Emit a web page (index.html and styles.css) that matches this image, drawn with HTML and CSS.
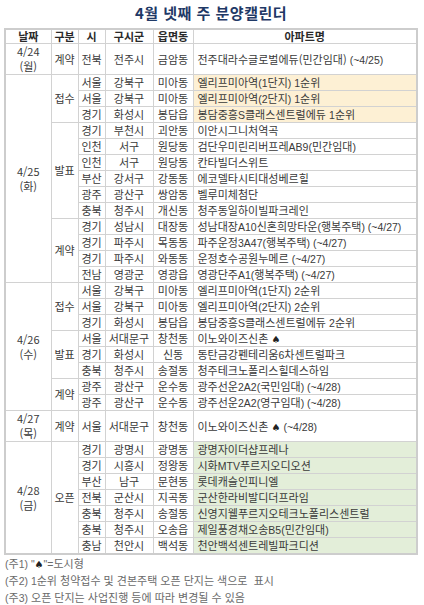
FILE: index.html
```html
<!DOCTYPE html>
<html lang="ko">
<head>
<meta charset="utf-8">
<link rel="stylesheet" href="styles.css">
</head>
<body>
<div class="page">
  <h1 class="title">4월 넷째 주 분양캘린더</h1>
  <table class="cal">
    <colgroup>
      <col class="c-date"><col class="c-type"><col class="c-si"><col class="c-gu"><col class="c-dong"><col class="c-apt">
    </colgroup>
    <thead>
      <tr><th>날짜</th><th>구분</th><th>시</th><th>구시군</th><th>읍면동</th><th>아파트명</th></tr>
    </thead>
    <tbody>
      <tr class="tall"><td>4/24<br>(월)</td><td>계약</td><td>전북</td><td>전주시</td><td>금암동</td><td class="apt">전주대라수글로벌에듀(민간임대) <span class="en">(~4/25)</span></td></tr>

      <tr><td rowspan="13">4/25<br>(화)</td><td rowspan="3">접수</td><td>서울</td><td>강북구</td><td>미아동</td><td class="apt hl-y">엘리프미아역<span class="en">(1</span>단지<span class="en">) 1</span>순위</td></tr>
      <tr><td>서울</td><td>강북구</td><td>미아동</td><td class="apt hl-y">엘리프미아역<span class="en">(2</span>단지<span class="en">) 1</span>순위</td></tr>
      <tr><td>경기</td><td>화성시</td><td>봉담읍</td><td class="apt hl-y">봉담중흥<span class="en">S</span>클래스센트럴에듀 <span class="en">1</span>순위</td></tr>
      <tr><td rowspan="6">발표</td><td>경기</td><td>부천시</td><td>괴안동</td><td class="apt">이안시그니처역곡</td></tr>
      <tr><td>인천</td><td>서구</td><td>원당동</td><td class="apt">검단우미린리버프레<span class="en">AB9(</span>민간임대<span class="en">)</span></td></tr>
      <tr><td>인천</td><td>서구</td><td>원당동</td><td class="apt">칸타빌더스위트</td></tr>
      <tr><td>부산</td><td>강서구</td><td>강동동</td><td class="apt">에코델타시티대성베르힐</td></tr>
      <tr><td>광주</td><td>광산구</td><td>쌍암동</td><td class="apt">벨루미체첨단</td></tr>
      <tr><td>충북</td><td>청주시</td><td>개신동</td><td class="apt">청주동일하이빌파크레인</td></tr>
      <tr><td rowspan="4">계약</td><td>경기</td><td>성남시</td><td>대장동</td><td class="apt">성남대장<span class="en">A10</span>신혼희망타운<span class="en">(</span>행복주택<span class="en">) (~4/27)</span></td></tr>
      <tr><td>경기</td><td>파주시</td><td>목동동</td><td class="apt">파주운정<span class="en">3A47(</span>행복주택<span class="en">) (~4/27)</span></td></tr>
      <tr><td>경기</td><td>파주시</td><td>와동동</td><td class="apt">운정호수공원누메르 <span class="en">(~4/27)</span></td></tr>
      <tr><td>전남</td><td>영광군</td><td>영광읍</td><td class="apt">영광단주<span class="en">A1(</span>행복주택<span class="en">) (~4/27)</span></td></tr>

      <tr><td rowspan="8">4/26<br>(수)</td><td rowspan="3">접수</td><td>서울</td><td>강북구</td><td>미아동</td><td class="apt">엘리프미아역<span class="en">(1</span>단지<span class="en">) 2</span>순위</td></tr>
      <tr><td>서울</td><td>강북구</td><td>미아동</td><td class="apt">엘리프미아역<span class="en">(2</span>단지<span class="en">) 2</span>순위</td></tr>
      <tr><td>경기</td><td>화성시</td><td>봉담읍</td><td class="apt">봉담중흥<span class="en">S</span>클래스센트럴에듀 <span class="en">2</span>순위</td></tr>
      <tr><td rowspan="3">발표</td><td>서울</td><td>서대문구</td><td>창천동</td><td class="apt">이노와이즈신촌 <span class="spade">♠</span></td></tr>
      <tr><td>경기</td><td>화성시</td><td>신동</td><td class="apt">동탄금강펜테리움<span class="en">6</span>차센트럴파크</td></tr>
      <tr><td>충북</td><td>청주시</td><td>송절동</td><td class="apt">청주테크노폴리스힐데스하임</td></tr>
      <tr><td rowspan="2">계약</td><td>광주</td><td>광산구</td><td>운수동</td><td class="apt">광주선운<span class="en">2A2(</span>국민임대<span class="en">) (~4/28)</span></td></tr>
      <tr><td>광주</td><td>광산구</td><td>운수동</td><td class="apt">광주선운<span class="en">2A2(</span>영구임대<span class="en">) (~4/28)</span></td></tr>

      <tr class="tall"><td>4/27<br>(목)</td><td>계약</td><td>서울</td><td>서대문구</td><td>창천동</td><td class="apt">이노와이즈신촌 <span class="spade">♠</span> <span class="en">(~4/28)</span></td></tr>

      <tr><td rowspan="7">4/28<br>(금)</td><td rowspan="7">오픈</td><td>경기</td><td>광명시</td><td>광명동</td><td class="apt hl-g">광명자이더샵프레나</td></tr>
      <tr><td>경기</td><td>시흥시</td><td>정왕동</td><td class="apt hl-g">시화<span class="en">MTV</span>푸르지오디오션</td></tr>
      <tr><td>부산</td><td>남구</td><td>문현동</td><td class="apt hl-g">롯데캐슬인피니엘</td></tr>
      <tr><td>전북</td><td>군산시</td><td>지곡동</td><td class="apt hl-g">군산한라비발디더프라임</td></tr>
      <tr><td>충북</td><td>청주시</td><td>송절동</td><td class="apt hl-g">신영지웰푸르지오테크노폴리스센트럴</td></tr>
      <tr><td>충북</td><td>청주시</td><td>오송읍</td><td class="apt hl-g">제일풍경채오송<span class="en">B5(</span>민간임대<span class="en">)</span></td></tr>
      <tr><td>충남</td><td>천안시</td><td>백석동</td><td class="apt hl-g">천안백석센트레빌파크디션</td></tr>
    </tbody>
  </table>
  <ul class="notes">
    <li><span class="en">(</span>주<span class="en">1) "</span><span class="spade">♠</span><span class="en">"=</span>도시형</li>
    <li><span class="en">(</span>주<span class="en">2) 1</span>순위 청약접수 및 견본주택 오픈 단지는 색으로 &nbsp;표시</li>
    <li><span class="en">(</span>주<span class="en">3)</span> 오픈 단지는 사업진행 등에 따라 변경될 수 있음</li>
  </ul>
</div>
</body>
</html>
```

FILE: styles.css
```css
html, body {
  margin: 0;
  padding: 0;
  background: #ffffff;
}

.page {
  padding: 0 6px 0 4px;
  font-family: "Noto Sans CJK KR", "Liberation Sans", sans-serif;
  color: #3a3a3a;
}

.title {
  margin: 0;
  padding-top: 3px;
  height: 25px;
  line-height: 20px;
  text-align: center;
  font-size: 15px;
  font-weight: bold;
  color: #1f3966;
  letter-spacing: 0.5px;
}

.cal {
  width: 414px;
  border-collapse: collapse;
  table-layout: fixed;
  border: 2px solid #cdcdcd;
  font-size: 11px;
}

.c-date { width: 46px; }
.c-type { width: 27px; }
.c-si { width: 27px; }
.c-gu { width: 48px; }
.c-dong { width: 40px; }
.c-apt { width: auto; }

.cal th,
.cal td {
  border: 1px solid #d2d2d2;
  padding: 0;
  height: 15px;
  line-height: 15px;
  text-align: center;
  vertical-align: middle;
  white-space: nowrap;
  overflow: hidden;
}

.cal th {
  height: 13px;
  line-height: 13px;
  font-weight: bold;
  color: #2a2a2a;
}

.cal td.apt {
  text-align: left;
  padding-left: 4px;
}

.cal td.hl-y { background: #fdf0d4; }
.cal td.hl-g { background: #e3eed9; }

.en {
  font-family: "Liberation Sans", sans-serif;
  font-size: 10.5px;
  line-height: 1;
}

.spade {
  font-family: "DejaVu Sans", sans-serif;
  font-size: 10px;
  line-height: 1;
  color: #222;
}

.notes {
  list-style: none;
  margin: 0;
  padding: 0 0 0 1px;
  font-size: 11px;
  line-height: 17px;
  color: #6a6a6a;
}
```
